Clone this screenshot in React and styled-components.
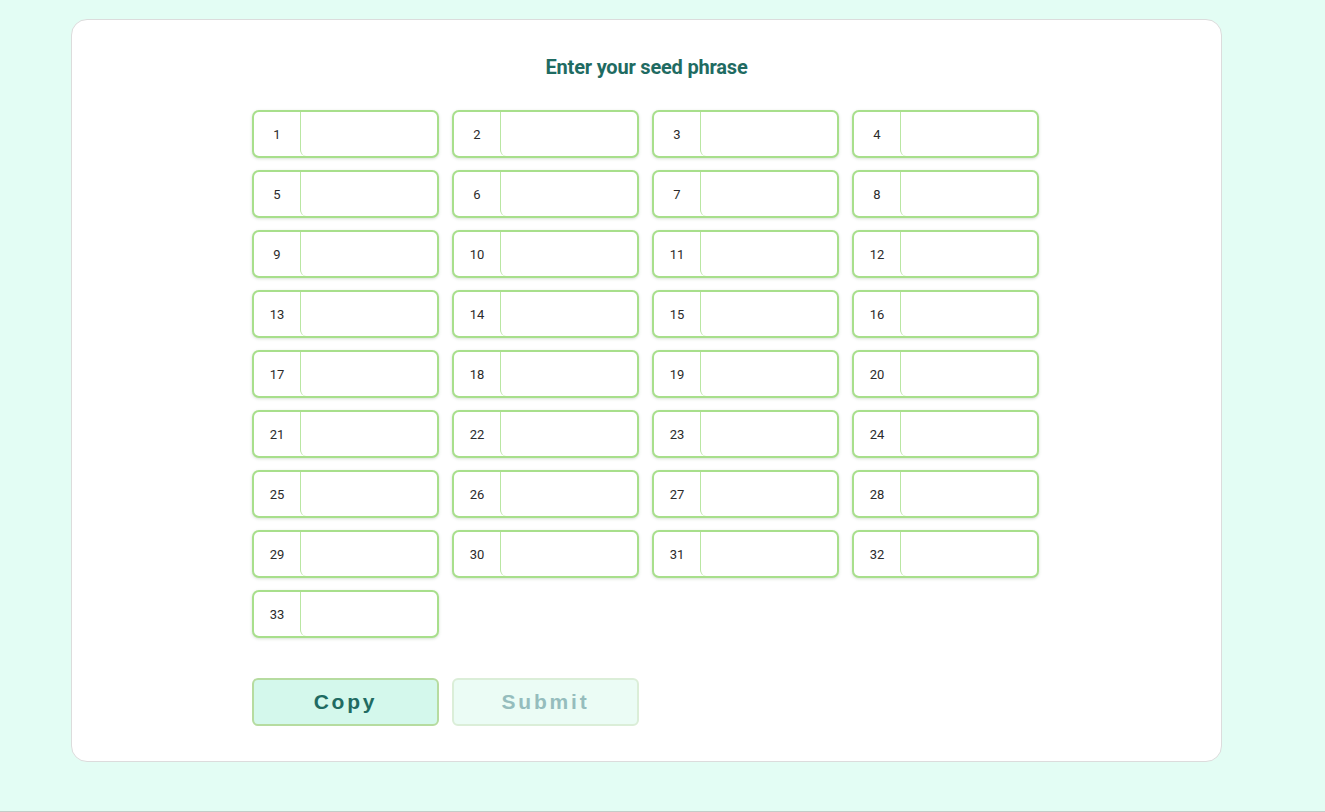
import styled, { createGlobalStyle } from 'styled-components';

const GlobalStyle = createGlobalStyle`
  html, body {
    margin: 0;
    padding: 0;
    background: #e3fdf4;
    font-family: Roboto, "Noto Sans", sans-serif;
  }
`;

const Page = styled.main`
  height: 812px;
  box-sizing: border-box;
  padding: 19px 0 0 71px;
  border-bottom: 1px solid #c4ccc8;
`;

const Card = styled.section`
  width: 1151px;
  height: 743px;
  box-sizing: border-box;
  background: #ffffff;
  border: 1px solid #dcdcdc;
  border-radius: 16px;
  padding: 35px 0 0;
  display: flex;
  flex-direction: column;
  align-items: center;
`;

const Title = styled.h2`
  margin: 0 0 31px;
  font-size: 20px;
  font-weight: 700;
  color: #1f6b62;
  letter-spacing: -0.2px;
  line-height: 24px;
`;

const Grid = styled.div`
  display: grid;
  grid-template-columns: repeat(4, 187px);
  column-gap: 13px;
  row-gap: 12px;
  width: 787px;
  margin-right: 2px;
`;

const Cell = styled.label`
  display: flex;
  height: 48px;
  box-sizing: border-box;
  border: 2px solid #a8df8c;
  border-radius: 7px;
  background: #fff;
  box-shadow: 0 1px 3px rgba(90, 130, 80, 0.25);
  overflow: hidden;
`;

const Num = styled.span`
  width: 46px;
  flex: none;
  display: flex;
  align-items: center;
  justify-content: center;
  font-size: 13px;
  color: #2b2b2b;
`;

const Word = styled.input`
  flex: 1;
  min-width: 0;
  border: none;
  border-left: 1px solid #b9e6a2;
  border-bottom-left-radius: 6px;
  outline: none;
  background: transparent;
  font: inherit;
  font-size: 14px;
  padding: 0 10px;
`;

const Actions = styled.div`
  display: grid;
  grid-template-columns: repeat(4, 187px);
  column-gap: 13px;
  width: 787px;
  margin: 40px 2px 0 0;
`;

const Button = styled.button`
  height: 48px;
  box-sizing: border-box;
  border-radius: 6px;
  border: 2px solid ${({ disabled }) => (disabled ? '#dbeed8' : '#b6dca0')};
  background: ${({ disabled }) => (disabled ? '#ebfcf5' : '#d4f8ec')};
  color: ${({ disabled }) => (disabled ? '#95bdbd' : '#1f6b62')};
  font-family: "Liberation Sans", Arial, sans-serif;
  font-weight: 700;
  font-size: 21px;
  letter-spacing: 2.8px;
  cursor: ${({ disabled }) => (disabled ? 'default' : 'pointer')};
`;

const words = Array.from({ length: 33 }, (_, i) => i + 1);

export default function App() {
  return (
    <>
      <GlobalStyle />
      <Page>
        <Card>
          <Title>Enter your seed phrase</Title>
          <Grid>
            {words.map((n) => (
              <Cell key={n}>
                <Num>{n}</Num>
                <Word type="text" aria-label={`Word ${n}`} />
              </Cell>
            ))}
          </Grid>
          <Actions>
            <Button type="button">Copy</Button>
            <Button type="button" disabled>
              Submit
            </Button>
          </Actions>
        </Card>
      </Page>
    </>
  );
}
